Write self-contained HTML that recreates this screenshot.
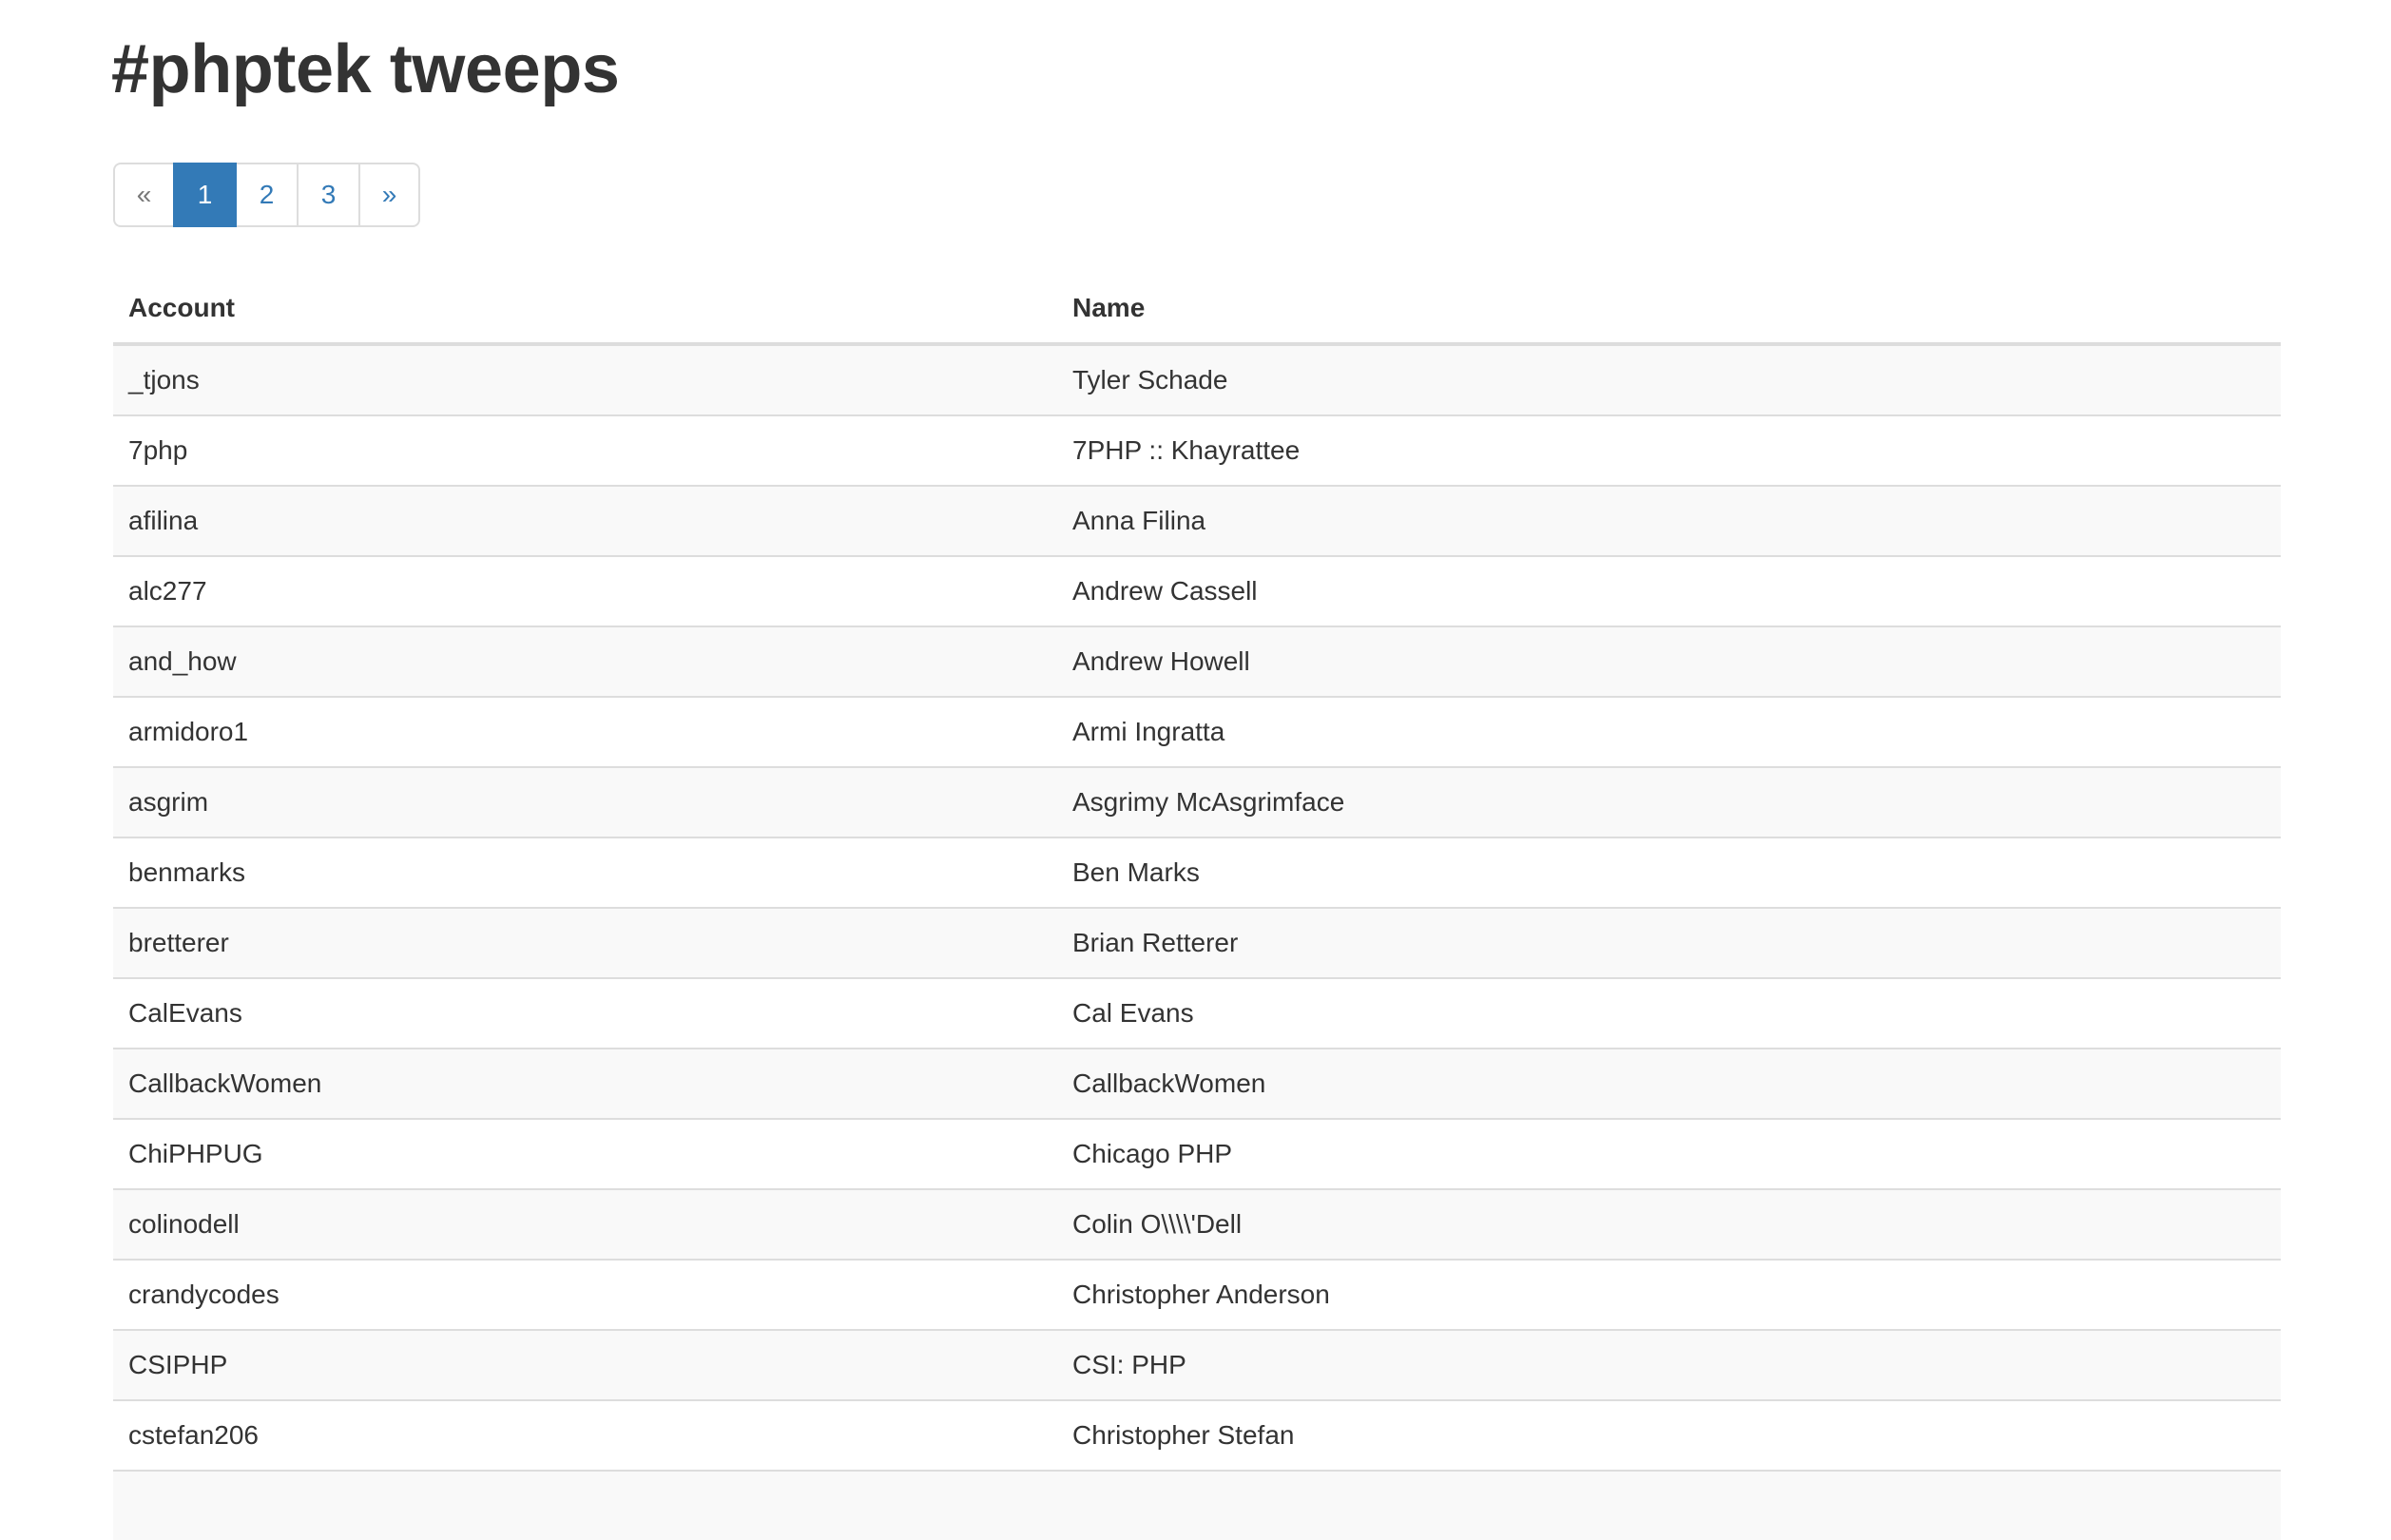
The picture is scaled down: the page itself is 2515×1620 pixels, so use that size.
<!DOCTYPE html>
<html><head><meta charset="utf-8"><style>
html,body{margin:0;padding:0;background:#fff;}
body{width:2515px;height:1572px;overflow:hidden;position:relative;font-family:"Liberation Sans",Helvetica,Arial,sans-serif;color:#333;font-size:28px;}
h1{position:absolute;left:117px;top:34px;margin:0;font-size:72px;line-height:79px;font-weight:bold;letter-spacing:-0.4px;}
.pg{position:absolute;left:119px;top:171px;display:flex;height:68px;}
.pg span{box-sizing:border-box;display:block;height:68px;line-height:64px;border:2px solid #ddd;margin-left:-2px;color:#337ab7;text-align:center;font-size:28px;}
.pg span:first-child{border-radius:8px 0 0 8px;margin-left:0;color:#777;}
.pg span:last-child{border-radius:0 8px 8px 0;}
.pg span.a{background:#337ab7;border-color:#337ab7;color:#fff;position:relative;}
table{position:absolute;left:119px;top:288px;width:2280px;border-collapse:collapse;table-layout:fixed;}
td,th{padding:0 16px;height:72px;line-height:40px;text-align:left;border-top:2px solid #ddd;font-size:28px;}
th{border-top:0;border-bottom:4px solid #ddd;font-weight:bold;height:72px;}
tbody tr:nth-child(odd){background:#f9f9f9;}
</style></head><body>
<h1>#phptek tweeps</h1>
<div class="pg"><span style="width:65px">«</span><span class="a" style="width:67px">1</span><span style="width:67px">2</span><span style="width:67px">3</span><span style="width:65px">»</span></div>
<table>
<colgroup><col style="width:993px"><col></colgroup>
<thead><tr><th>Account</th><th>Name</th></tr></thead>
<tbody>
<tr><td style="border-top:0">_tjons</td><td style="border-top:0">Tyler Schade</td></tr>
<tr><td>7php</td><td>7PHP :: Khayrattee</td></tr>
<tr><td>afilina</td><td>Anna Filina</td></tr>
<tr><td>alc277</td><td>Andrew Cassell</td></tr>
<tr><td>and_how</td><td>Andrew Howell</td></tr>
<tr><td>armidoro1</td><td>Armi Ingratta</td></tr>
<tr><td>asgrim</td><td>Asgrimy McAsgrimface</td></tr>
<tr><td>benmarks</td><td>Ben Marks</td></tr>
<tr><td>bretterer</td><td>Brian Retterer</td></tr>
<tr><td>CalEvans</td><td>Cal Evans</td></tr>
<tr><td>CallbackWomen</td><td>CallbackWomen</td></tr>
<tr><td>ChiPHPUG</td><td>Chicago PHP</td></tr>
<tr><td>colinodell</td><td>Colin O\\\\'Dell</td></tr>
<tr><td>crandycodes</td><td>Christopher Anderson</td></tr>
<tr><td>CSIPHP</td><td>CSI: PHP</td></tr>
<tr><td>cstefan206</td><td>Christopher Stefan</td></tr>
<tr><td>&nbsp;</td><td>&nbsp;</td></tr>
</tbody></table>
</body></html>
